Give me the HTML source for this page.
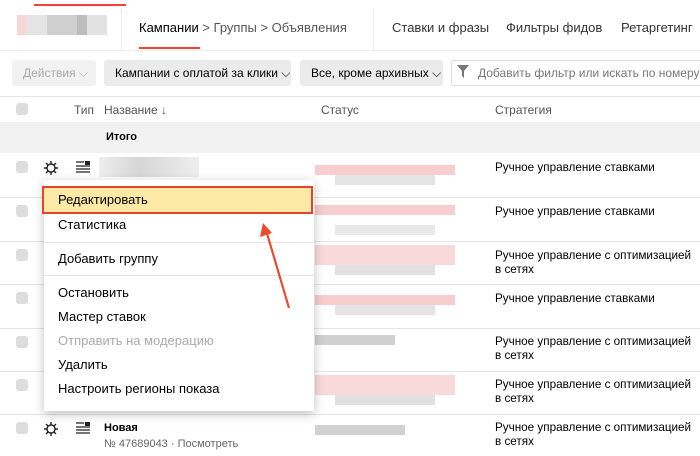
<!DOCTYPE html>
<html><head><meta charset="utf-8"><style>
*{margin:0;padding:0;box-sizing:border-box}
body{width:700px;height:456px;overflow:hidden;background:#fff;font-family:"Liberation Sans",sans-serif;color:#000;position:relative}
.a{position:absolute;white-space:nowrap}
.t13{font-size:13px}
.btn{position:absolute;top:60px;height:26px;background:#ebebeb;border-radius:3px;font-size:12px;line-height:26px;padding-left:11px}
.cb{position:absolute;width:12px;height:12px;background:#ddd;border-radius:3px}
.hl{position:absolute;left:0;width:700px;height:1px;background:#e6e6e6}
.mi{position:absolute;left:58px;font-size:13px}
.px{position:absolute}
.st{position:absolute;left:495px;font-size:11.7px;line-height:14px;white-space:nowrap}
</style></head><body>
<div class="px" style="left:34px;top:4px;width:92px;height:2px;background:#f44336"></div>
<div class="px" style="left:17px;top:15px;width:90px;height:20px;background:linear-gradient(90deg,#f6d8d8 0 10px,#e4e4e4 10px 30px,#cfcfcf 30px 60px,#bdbdbd 60px 70px,#e2e2e2 70px 90px)"></div>
<div class="px" style="left:121px;top:8px;width:1px;height:42px;background:#eee"></div>
<div class="px" style="left:0;top:50px;width:700px;height:1px;background:#eee"></div>
<div class="a t13" style="left:139px;top:20px">Кампании <span style="color:#555">&gt; Группы &gt; Объявления</span></div>
<div class="px" style="left:139px;top:47px;width:61px;height:2px;background:#f44336"></div>
<div class="px" style="left:373px;top:8px;width:1px;height:42px;background:#eee"></div>
<div class="a t13" style="left:392px;top:20px;color:#333">Ставки и фразы</div>
<div class="a t13" style="left:506px;top:20px;color:#333">Фильтры фидов</div>
<div class="a t13" style="left:621px;top:20px;color:#333">Ретаргетинг</div>
<div class="btn" style="left:12px;width:84px;background:#f2f2f2;color:#aaa">Действия ⌵</div>
<div class="btn" style="left:104px;width:187px">Кампании с оплатой за клики ⌵</div>
<div class="btn" style="left:300px;width:143px">Все, кроме архивных ⌵</div>
<div class="px" style="left:451px;top:60px;width:260px;height:26px;border:1px solid #ddd;border-radius:3px"></div>
<svg class="px" style="left:457px;top:65px" width="12" height="14"><path d="M0 0H12L7 6V13L5 11V6Z" fill="#777"/></svg>
<div class="a" style="left:478px;top:66px;font-size:12px;color:#777">Добавить фильтр или искать по номеру</div>
<div class="hl" style="top:96px"></div>
<div class="cb" style="left:16px;top:103px"></div>
<div class="a" style="left:74px;top:103px;font-size:12px;color:#555">Тип</div>
<div class="a" style="left:104px;top:103px;font-size:12px;color:#555">Название ↓</div>
<div class="a" style="left:321px;top:103px;font-size:12px;color:#555">Статус</div>
<div class="a" style="left:495px;top:103px;font-size:12px;color:#555">Стратегия</div>
<div class="px" style="left:0;top:122px;width:700px;height:31px;background:#f2f2f2"></div>
<div class="a" style="left:106px;top:131px;font-size:11px;font-weight:bold">Итого</div>
<div class="hl" style="top:197px"></div><div class="hl" style="top:241px"></div><div class="hl" style="top:284px"></div>
<div class="hl" style="top:328px"></div><div class="hl" style="top:371px"></div><div class="hl" style="top:414px"></div>
<div class="cb" style="left:16px;top:161px"></div><div class="cb" style="left:16px;top:205px"></div><div class="cb" style="left:16px;top:249px"></div>
<div class="cb" style="left:16px;top:292px"></div><div class="cb" style="left:16px;top:336px"></div><div class="cb" style="left:16px;top:379px"></div><div class="cb" style="left:16px;top:422px"></div>
<svg class="px" style="left:43px;top:160px" width="16" height="16" viewBox="0 0 16 16"><g stroke="#222" stroke-width="1.4" fill="none"><circle cx="8" cy="8" r="4"/><path d="M8 1V4M8 12V15M1 8H4M12 8H15M3 3L5.2 5.2M10.8 10.8L13 13M13 3L10.8 5.2M5.2 10.8L3 13"/></g></svg>
<svg class="px" style="left:43px;top:421px" width="16" height="16" viewBox="0 0 16 16"><g stroke="#222" stroke-width="1.4" fill="none"><circle cx="8" cy="8" r="4"/><path d="M8 1V4M8 12V15M1 8H4M12 8H15M3 3L5.2 5.2M10.8 10.8L13 13M13 3L10.8 5.2M5.2 10.8L3 13"/></g></svg>
<svg class="px" style="left:76px;top:161px" width="14" height="12"><path d="M0 1H8M0 5H14M0 8H14M0 11H14" stroke="#222" stroke-width="1.3"/><rect x="9" y="0" width="5" height="4" fill="#222"/></svg>
<svg class="px" style="left:76px;top:422px" width="14" height="12"><path d="M0 1H8M0 5H14M0 8H14M0 11H14" stroke="#222" stroke-width="1.3"/><rect x="9" y="0" width="5" height="4" fill="#222"/></svg>
<div class="px" style="left:99px;top:157px;width:100px;height:20px;background:linear-gradient(90deg,#eee,#d6d6d6 40%,#e2e2e2 70%,#eee)"></div>
<div class="a" style="left:104px;top:422px;font-size:11px;font-weight:bold">Новая</div>
<div class="a" style="left:104px;top:438px;font-size:11px;color:#666">№ 47689043 · Посмотреть</div>
<div class="px" style="left:315px;top:165px;width:140px;height:10px;background:#f7cdcd"></div><div class="px" style="left:335px;top:175px;width:100px;height:10px;background:#e4e4e4"></div>
<div class="px" style="left:315px;top:205px;width:140px;height:10px;background:#f7cdcd"></div><div class="px" style="left:335px;top:225px;width:100px;height:10px;background:#e8e8e8"></div>
<div class="px" style="left:315px;top:245px;width:140px;height:20px;background:#f9dada"></div><div class="px" style="left:335px;top:265px;width:100px;height:10px;background:#e0e0e0"></div>
<div class="px" style="left:315px;top:295px;width:140px;height:10px;background:#f7cdcd"></div><div class="px" style="left:335px;top:305px;width:100px;height:10px;background:#e4e4e4"></div>
<div class="px" style="left:315px;top:335px;width:80px;height:10px;background:#d0d0d0"></div>
<div class="px" style="left:315px;top:375px;width:140px;height:20px;background:#f9dada"></div><div class="px" style="left:335px;top:395px;width:100px;height:10px;background:#e0e0e0"></div>
<div class="px" style="left:315px;top:425px;width:90px;height:10px;background:#d0d0d0"></div>
<div class="st" style="top:161px">Ручное управление ставками</div>
<div class="st" style="top:205px">Ручное управление ставками</div>
<div class="st" style="top:249px">Ручное управление с оптимизацией<br>в сетях</div>
<div class="st" style="top:292px">Ручное управление ставками</div>
<div class="st" style="top:335px">Ручное управление с оптимизацией<br>в сетях</div>
<div class="st" style="top:378px">Ручное управление с оптимизацией<br>в сетях</div>
<div class="st" style="top:421px">Ручное управление с оптимизацией<br>в сетях</div>
<div class="px" style="left:44px;top:180px;width:270px;height:231px;background:#fff;box-shadow:0 3px 10px rgba(0,0,0,.25)"></div>
<div class="px" style="left:42px;top:186px;width:271px;height:28px;background:#fde9a6;border:2px solid #e8412c"></div>
<div class="px" style="left:44px;top:242px;width:270px;height:1px;background:#e6e6e6"></div>
<div class="px" style="left:44px;top:275px;width:270px;height:1px;background:#e6e6e6"></div>
<div class="mi" style="top:192px">Редактировать</div>
<div class="mi" style="top:217px">Статистика</div>
<div class="mi" style="top:251px">Добавить группу</div>
<div class="mi" style="top:285px">Остановить</div>
<div class="mi" style="top:309px">Мастер ставок</div>
<div class="mi" style="top:333px;color:#aaa">Отправить на модерацию</div>
<div class="mi" style="top:357px">Удалить</div>
<div class="mi" style="top:381px">Настроить регионы показа</div>
<svg class="px" style="left:255px;top:220px" width="45" height="95"><path d="M34 88L11 10" stroke="#ec4a2b" stroke-width="2.2" fill="none"/><path d="M8 3L5 17L17 13Z" fill="#ec4a2b"/></svg>
</body></html>
